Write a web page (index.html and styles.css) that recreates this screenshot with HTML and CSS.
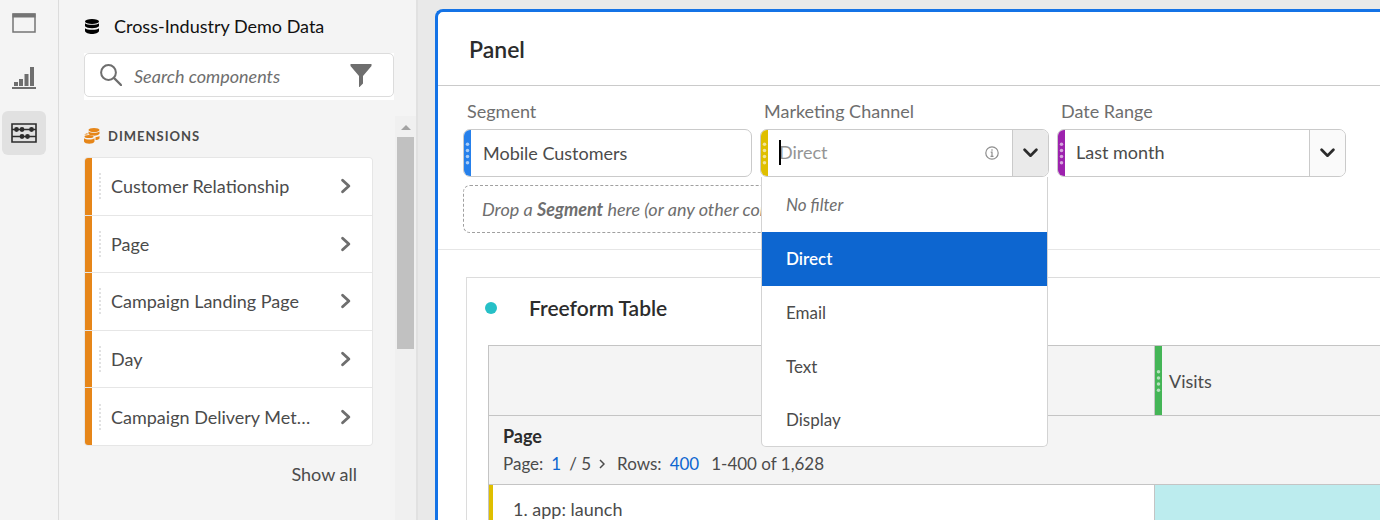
FILE: index.html
```html
<!DOCTYPE html>
<html lang="en">
<head>
<meta charset="utf-8">
<meta name="viewport" content="width=device-width, initial-scale=1">
<title>Workspace</title>
<link rel="stylesheet" href="styles.css">
</head>
<body>
<div class="app">
  <nav class="rail" aria-label="Workspace tools">
    <button class="rail-btn" aria-label="Panels">
      <svg width="24" height="20" viewBox="0 0 24 20"><path d="M1 1h22v18H1z" fill="none" stroke="#747474" stroke-width="1.5"/><path d="M.5.5h23v4H.5z" fill="#747474"/></svg>
    </button>
    <button class="rail-btn" aria-label="Visualizations">
      <svg width="24" height="22" viewBox="0 0 24 22" fill="#6e6e6e"><path d="M2 15h4v4H2zM7 12h4v7H7zM12.500 7h4v12h-4zM18 0h4v19h-4zM0 20h24v2H0z"/></svg>
    </button>
    <button class="rail-btn rail-btn-active" aria-label="Components">
      <svg width="26" height="20" viewBox="0 0 26 20"><path d="M1 1h24v18H1zM1 6.500h24M1 13.500h24" fill="none" stroke="#2c2c2c" stroke-width="1.600"/><g fill="#2c2c2c"><circle cx="5.500" cy="6.500" r="2.400"/><circle cx="11" cy="6.500" r="2.400"/><circle cx="20.500" cy="6.500" r="2.400"/><circle cx="11" cy="13.500" r="2.400"/><circle cx="16.500" cy="13.500" r="2.400"/></g></svg>
    </button>
  </nav>

  <aside class="sidebar">
    <div class="dataset">
      <svg width="14" height="15" viewBox="0 0 14 15"><ellipse cx="7" cy="2.500" rx="7" ry="2.500"/><path d="M0 4.300c2 2 12 2 14 0v3c-2 2.600-12 2.600-14 0zM0 9.200c2 2 12 2 14 0v2.800c-1 4-13 4-14 0z"/></svg>
      <span>Cross-Industry Demo Data</span>
    </div>
    <div class="search-wrap">
      <div class="search">
        <svg width="22" height="22" viewBox="0 0 22 22" fill="none" stroke="#6e6e6e"><circle cx="8.500" cy="8.500" r="7.400" stroke-width="2"/><path d="M14 14l7 7" stroke-width="2.400" stroke-linecap="round"/></svg>
        <input type="search" aria-label="Search components" placeholder="Search components">
        <button aria-label="Filter"><svg width="22" height="23" viewBox="0 0 22 23"><path d="M.5 0h21v2L13 12v7.500L9.500 23H9V12L.5 2z" fill="#6e6e6e"/></svg></button>
      </div>
    </div>
    <div class="scroller">
      <section class="components">
        <h2><svg width="16" height="16" viewBox="0 0 16 16" fill="#e68619"><ellipse cx="10" cy="2" rx="5.500" ry="2"/><path d="M4.500 3.500c2 1.800 9 1.800 11 0v2.300c-2 2-5 2-6.500 1.700C7 7 5 7 4.500 6zM11.500 9.200c1.500 0 3-.5 4-1.200v2.500c-1 1.300-2.500 1.600-4 1.600z"/><ellipse cx="5" cy="8.500" rx="4.500" ry="1.500"/><path d="M0 10.200c2 1.800 8.500 1.800 10.500 0v3.300c-1 3-9.500 3-10.500 0zM0 6.500L3.500 5v1.500z"/></svg>DIMENSIONS</h2>
        <ul class="dims">
          <li><i class="grip"></i><span>Customer Relationship</span><button aria-label="Expand Customer Relationship"><svg class="chev" viewBox="0 0 10 14"><path d="M2 2l5.500 5L2 12"/></svg></button></li>
          <li><i class="grip"></i><span>Page</span><button aria-label="Expand Page"><svg class="chev" viewBox="0 0 10 14"><path d="M2 2l5.500 5L2 12"/></svg></button></li>
          <li><i class="grip"></i><span>Campaign Landing Page</span><button aria-label="Expand Campaign Landing Page"><svg class="chev" viewBox="0 0 10 14"><path d="M2 2l5.500 5L2 12"/></svg></button></li>
          <li><i class="grip"></i><span>Day</span><button aria-label="Expand Day"><svg class="chev" viewBox="0 0 10 14"><path d="M2 2l5.500 5L2 12"/></svg></button></li>
          <li><i class="grip"></i><span>Campaign Delivery Met…</span><button aria-label="Expand Campaign Delivery"><svg class="chev" viewBox="0 0 10 14"><path d="M2 2l5.500 5L2 12"/></svg></button></li>
        </ul>
        <button class="show-all">Show all</button>
      </section>
      <div class="track"><svg width="10" height="5" viewBox="0 0 10 5"><path d="M5 0l5 5H0z" fill="#a3a3a3"/></svg><div class="thumb"></div></div>
    </div>
  </aside>

  <main class="workspace">
    <section class="panel">
      <header class="panel-head"><h1>Panel</h1></header>
      <div class="filters">
        <div class="field">
          <span class="label">Segment</span>
          <div class="control segment"><svg class="handle" viewBox="0 0 8 46"><g><circle cx="4" cy="13" r="2"/><circle cx="4" cy="20" r="2"/><circle cx="4" cy="27" r="2"/><circle cx="4" cy="34" r="2"/></g></svg><span class="value">Mobile Customers</span></div>
        </div>
        <div class="field">
          <label class="label" for="channel">Marketing Channel</label>
          <div class="control channel">
            <svg class="handle" viewBox="0 0 8 46"><g><circle cx="4" cy="13" r="2"/><circle cx="4" cy="20" r="2"/><circle cx="4" cy="27" r="2"/><circle cx="4" cy="34" r="2"/></g></svg>
            <span class="entry"><input id="channel" type="text" role="combobox" aria-expanded="true" aria-controls="channel-list" placeholder="Direct"><i class="caret"></i></span>
            <svg class="info" width="14" height="14" viewBox="0 0 14 14" fill="none" stroke="#8e8e8e" stroke-width="1.200"><circle cx="7" cy="7" r="6.200"/><path d="M7 3.200v1.500M5.700 6.200H7v4M5.500 10.300h3"/></svg>
            <button class="toggle" aria-label="Close list"><svg class="down" viewBox="0 0 14 9"><path d="M1.500 1.500L7 7l5.500-5.500"/></svg></button>
          </div>
          <ul class="menu" id="channel-list" role="listbox" aria-label="Marketing Channel">
            <li class="none" role="option">No filter</li>
            <li class="selected" role="option" aria-selected="true">Direct</li>
            <li role="option">Email</li>
            <li role="option">Text</li>
            <li role="option">Display</li>
          </ul>
        </div>
        <div class="field">
          <label class="label" for="range">Date Range</label>
          <div class="control range">
            <svg class="handle" viewBox="0 0 8 46"><g><circle cx="4" cy="13" r="2"/><circle cx="4" cy="20" r="2"/><circle cx="4" cy="27" r="2"/><circle cx="4" cy="34" r="2"/></g></svg>
            <select id="range"><option>Last month</option></select>
            <span class="toggle"><svg class="down" viewBox="0 0 14 9"><path d="M1.500 1.500L7 7l5.500-5.500"/></svg></span>
          </div>
        </div>
        <div class="drop">Drop a <b>Segment</b> here (or any other component)</div>
      </div>
      <div class="panel-body">
        <section class="card">
          <header class="card-head"><i class="dot"></i><h2>Freeform Table</h2></header>
          <table class="freeform">
            <colgroup><col class="col-dim"><col></colgroup>
            <thead>
              <tr class="metrics"><td></td><th scope="col"><div class="metric"><svg class="handle" viewBox="0 0 8 46"><g><circle cx="4" cy="13" r="2"/><circle cx="4" cy="20" r="2"/><circle cx="4" cy="27" r="2"/><circle cx="4" cy="34" r="2"/></g></svg><span>Visits</span></div></th></tr>
              <tr class="paging"><th colspan="2"><strong>Page</strong>
                <div class="pager"><span>Page:</span><button>1</button><span>/ 5</span><button class="next" aria-label="Next page"><svg width="6" height="10" viewBox="0 0 6 10"><path d="M1 1l4 4-4 4" fill="none" stroke="#4b4b4b" stroke-width="1.500"/></svg></button><span>Rows:</span><button>400</button><span class="count">1-400 of 1,628</span></div></th></tr>
            </thead>
            <tbody><tr class="row"><td>1. app: launch</td><td class="cell"></td></tr></tbody>
          </table>
        </section>
      </div>
    </section>
  </main>
</div>
</body>
</html>
```
FILE: styles.css
```css
* { box-sizing: border-box; }
body { margin: 0; overflow: hidden; background: #e9e9e9; color: #4b4b4b; font: 18px/24px Lato, "Noto Sans", sans-serif; }
button, input, select { font: inherit; color: inherit; border: 0; padding: 0; background: none; }
button { cursor: pointer; }
svg { display: block; flex: none; }
h1, h2, ul { margin: 0; padding: 0; font-weight: 600; }
ul { list-style: none; font-weight: 400; }
.app { display: flex; height: 100vh; }

.rail { flex: none; width: 59px; padding-left: 2px; border-right: 1px solid #dcdcdc; background: #f4f4f4; display: flex; flex-direction: column; gap: 11px; }
.rail-btn { width: 44px; height: 44px; border-radius: 6px; display: flex; align-items: center; justify-content: center; }
.rail-btn:first-child { margin-top: 1px; }
.rail-btn-active { background: #e1e1e1; }

.sidebar { flex: none; width: 359px; border-right: 2px solid #e1e1e1; background: #f4f4f4; display: flex; flex-direction: column; }
.dataset { display: flex; align-items: center; gap: 15px; padding: 14px 26px 15px; color: #111; }
.search-wrap { margin: 0 22px 16px 25px; padding-bottom: 3px; background: #fff; }
.search { height: 44px; border: 1px solid #dcdcdc; border-radius: 5px; background: #fff; display: flex; align-items: center; padding: 0 21px 0 15px; gap: 12px; }
.search input { flex: 1; min-width: 0; padding-top: 2px; outline: 0; }
.search input::placeholder { color: #6e6e6e; font-style: italic; opacity: 1; }
.scroller { flex: 1; min-height: 0; display: flex; justify-content: space-between; overflow: hidden; }
.components { flex: 1; padding: 10px 22px 0 25px; }
.components h2 { display: flex; align-items: center; gap: 8px; font-size: 13px; line-height: 20px; font-weight: 700; letter-spacing: 1px; margin-bottom: 11px; }
.dims { height: 289px; display: grid; grid-auto-rows: 1fr; gap: 1px; border: 1px solid #e6e6e6; border-radius: 4px; overflow: hidden; background: #e6e6e6; }
.dims li { display: flex; align-items: center; border-left: 7px solid #e68619; background: #fff; padding-right: 20px; white-space: nowrap; }
.dims span { flex: 1; }
.grip { height: 26px; border-left: 2px dotted #e1e1e1; margin: 0 10px 0 7px; }
.chev { width: 12px; height: 16px; fill: none; stroke: #6e6e6e; stroke-width: 2.500; stroke-linecap: round; stroke-linejoin: round; }
.show-all { display: block; margin: 16px 16px 0 auto; }
.track { width: 21px; background: #f0f0f0; display: flex; flex-direction: column; align-items: flex-start; padding: 9px 0 0 2px; gap: 7px; }
.track svg { margin-left: 4px; }
.thumb { width: 17px; height: 212px; background: #c1c1c1; }

.workspace { flex: 1; min-width: 0; padding: 9px 0 0 17px; }
.panel { height: 100%; border: 3px solid #1473e6; border-width: 3px 0 0 3px; border-radius: 8px 0 0 0; background: #fff; }
.panel-head { padding: 25px 31px 23px; border-bottom: 1px solid #cacaca; }
.panel-head h1 { font-size: 23px; line-height: 25px; color: #2c2c2c; }
.filters { display: grid; grid-template-columns: repeat(3, minmax(0, 289px)); gap: 8px; padding: 13px 25px 16px; border-bottom: 1px solid #e6e6e6; }
.field { position: relative; }
.label { display: block; margin: 0 4px 6px; color: #6e6e6e; }
.control { height: 48px; display: flex; align-items: stretch; border: 1px solid #cacaca; border-radius: 7px; background: #fff; overflow: hidden; }
.handle { width: 7px; height: 46px; }
.handle g { fill: #fff; opacity: .6; }
.segment .handle { background: #2680eb; }
.channel .handle { background: #dfbf00; }
.range .handle { background: #9d22ae; }
.value { align-self: center; margin-left: 12px; }
.entry { position: relative; flex: 1; min-width: 0; display: flex; margin-left: 11px; }
.entry input { width: 100%; padding-bottom: 2px; outline: 0; }
.entry input::placeholder { color: #959595; opacity: 1; }
.caret { position: absolute; left: 0; top: 10px; width: 2px; height: 25px; background: #000; }
.info { align-self: center; margin-right: 13px; }
.toggle { flex: none; width: 36px; border-left: 1px solid #cacaca; background: #fafafa; display: flex; align-items: center; justify-content: center; pointer-events: none; }
.channel .toggle { background: #eaeaea; pointer-events: auto; }
.down { width: 15px; height: 10px; fill: none; stroke: #2c2c2c; stroke-width: 2.500; stroke-linecap: round; stroke-linejoin: round; }
.range select { flex: 1; min-width: 0; appearance: none; margin-right: -36px; padding: 0 36px 2px 11px; outline: 0; }
.range .toggle { position: relative; }
.menu { position: absolute; z-index: 2; top: 100%; left: 1px; right: 1px; border: 1px solid #d3d3d3; border-top: 0; border-radius: 0 0 5px 5px; background: #fff; font-size: 17px; overflow: hidden; }
.menu li { height: 54px; padding: 0 24px; display: flex; align-items: center; }
.menu .none { height: 55px; font-style: italic; color: #6e6e6e; }
.menu .selected { background: #0d66d0; color: #fff; font-weight: 600; }
.menu li:last-child { height: 52px; }
.drop { grid-column: 1 / 3; justify-self: start; padding: 11px 18px; border: 1px dashed #a0a0a0; border-radius: 7px; font-style: italic; color: #6e6e6e; white-space: nowrap; }

.panel-body { padding: 27px 0 0 28px; }
.card { border: 1px solid #dcdcdc; border-width: 1px 0 0 1px; padding: 18px 0 0 21px; }
.card-head { display: flex; align-items: center; gap: 32px; margin: 0 0 25px -3px; }
.card-head h2 { font-size: 21px; line-height: 24px; color: #2c2c2c; }
.dot { width: 12px; height: 12px; border-radius: 50%; background: #26c0c7; }
.freeform { width: 100%; table-layout: fixed; border-collapse: separate; border-spacing: 0; border: 1px solid #c4c4c4; border-width: 1px 0 0 1px; }
.col-dim { width: 665px; }
.freeform td, .freeform th { padding: 0; text-align: left; font-weight: 400; }
.metrics, .paging { background: #f4f4f4; }
.metrics td, .metrics th { height: 70px; border-bottom: 1px solid #c4c4c4; }
.metrics th, .row .cell { border-left: 1px solid #c4c4c4; }
.metric { display: flex; align-items: center; gap: 7px; height: 69px; }
.metric .handle { height: 100%; background: #44b556; }
.freeform .paging th { height: 69px; padding: 6px 14px; border-bottom: 1px solid #c4c4c4; }
.paging strong { display: block; line-height: 28px; font-weight: 700; color: #2c2c2c; }
.pager { display: flex; align-items: center; gap: 8px; font-size: 17px; line-height: 28px; }
.pager button { color: #0d66d0; }
.pager .next { margin-right: 4px; }
.pager .count { margin-left: 4px; }
.freeform .row td:first-child { height: 47px; border-left: 4px solid #dfbf00; padding-left: 20px; }
.freeform .row .cell { background: #bcecee; }
```
